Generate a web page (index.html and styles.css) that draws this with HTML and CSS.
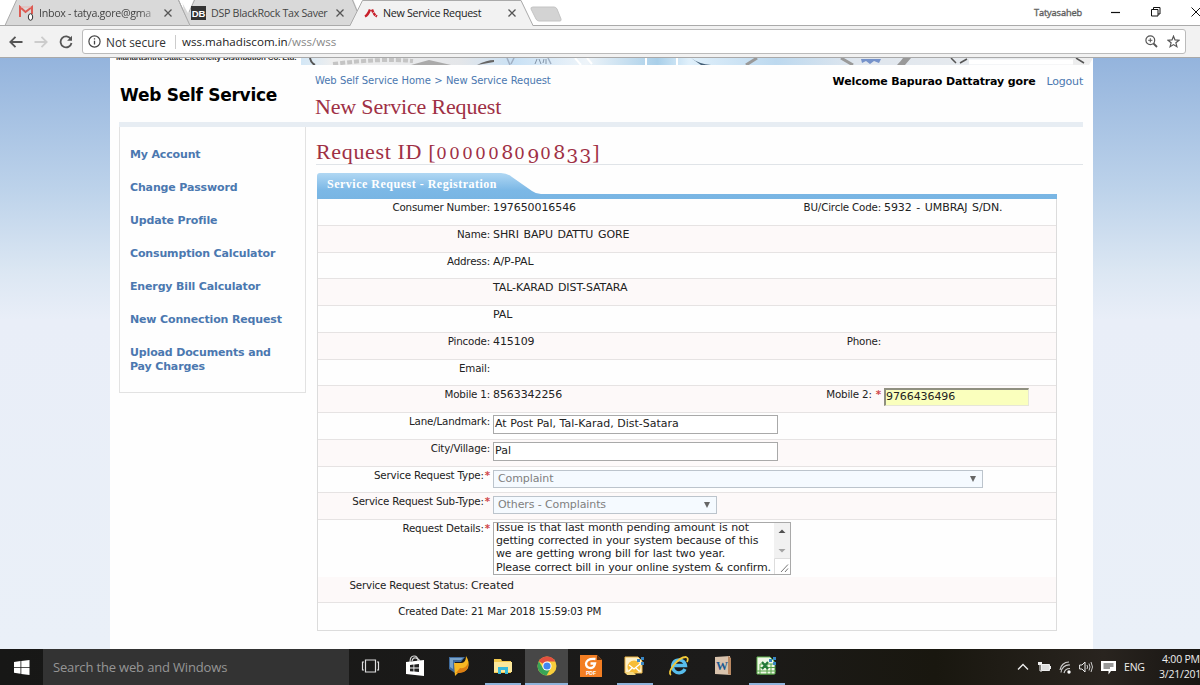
FILE: index.html
```
<!DOCTYPE html>
<html lang="en">
<head>
    <meta charset="UTF-8">
    <meta name="viewport" content="width=device-width, initial-scale=1.0">
    <title>New Service Request</title>
    <link rel="stylesheet" href="styles.css">
</head>
<body>
    <!-- Browser tabs -->
    <header class="tabs">
        <svg class="tabs-shape" width="1200" height="26" viewBox="0 0 1200 26">
            <path d="M0 25.5H1200" stroke="#aaa"/>
            <path d="M5 25.5L17 -1H178L190 25.5Z" fill="#d9d9d9" stroke="#aaa"/>
            <path d="M184 12L189 25.5H352L364 -1H182Z" fill="#d9d9d9"/>
            <path d="M178 -1L190 25.5H362M189 12L195 -1" fill="none" stroke="#aaa"/>
            <path d="M180 -1H194L188 13Z" fill="#fff"/>
            <path d="M353 -1H364L358 11Z" fill="#fff"/>
            <path d="M352 -1L357 11" stroke="#aaa"/>
            <path d="M350 26L363 -1H521L533 26Z" fill="#f2f2f2"/>
            <path d="M350 25.5L362.500 0.500H521L533 25.500" fill="none" stroke="#aaa"/>
            <path d="M533 7H554Q556 7 557 9L561 19Q561.500 21 560 21H539Q537 21 536 19L531 9Q530.500 7 533 7Z" fill="#d3d3d3" stroke="#c4c4c4"/>
        </svg>
        <div class="tab tab-one">
            <svg width="16" height="16" viewBox="0 0 16 16"><path d="M1 12V2L6.500 7L13 2V9" fill="none" stroke="#dd5a52" stroke-width="2"/><path d="M2 2H12" stroke="#e9b5b1"/><ellipse cx="11.500" cy="12" rx="2.200" ry="3.300" fill="#fff" stroke="#333"/></svg>
            <span class="tab-title faded">Inbox - tatya.gore@gma</span>
            <svg class="tab-close" width="8" height="8" viewBox="0 0 8 8"><path d="M.5 .5L7.500 7.500M7.500 .5L.5 7.500"/></svg>
        </div>
        <div class="tab tab-two">
            <span class="db-icon">DB</span>
            <span class="tab-title">DSP BlackRock Tax Saver</span>
            <svg class="tab-close" width="8" height="8" viewBox="0 0 8 8"><path d="M.5 .5L7.500 7.500M7.500 .5L.5 7.500"/></svg>
        </div>
        <div class="tab tab-three">
            <svg width="14" height="10" viewBox="0 0 14 10"><path d="M1 8.500Q4 7 6 1.500" fill="none" stroke="#c8202b" stroke-width="2.400"/><path d="M8 1.500Q10 7 13 8.500" fill="none" stroke="#c8202b" stroke-width="2.400" stroke-dasharray="3 .6"/></svg>
            <span class="tab-title">New Service Request</span>
            <svg class="tab-close" width="8" height="8" viewBox="0 0 8 8"><path d="M.5 .5L7.500 7.500M7.500 .5L.5 7.500"/></svg>
        </div>
        <div class="window-controls">
            <span class="profile">Tatyasaheb</span>
            <svg width="10" height="10" viewBox="0 0 10 10"><path d="M0 5.500H9" stroke="#111" stroke-width="1.200"/></svg>
            <svg width="10" height="10" viewBox="0 0 10 10"><path d="M.5 2.500H7V9H.5ZM2.500 2.500V.5H9V7H7" fill="none" stroke="#111"/></svg>
            <svg width="10" height="10" viewBox="0 0 10 10"><path d="M.5 .5L9.500 9.500M9.500 .5L.5 9.500" stroke="#111"/></svg>
        </div>
    </header>

    <!-- Address bar -->
    <div class="toolbar">
        <svg class="nav-icon" width="14" height="12" viewBox="0 0 14 12"><path d="M13.500 6H1.500M6.500 .8L1.300 6L6.500 11.200" stroke="#555"/></svg>
        <svg class="nav-icon" width="14" height="12" viewBox="0 0 14 12"><path d="M.5 6H12.500M7.500 .8L12.700 6L7.500 11.200" stroke="#ccc"/></svg>
        <svg class="nav-icon" width="14" height="14" viewBox="0 0 14 14"><path d="M11.800 4A5.500 5.500 0 1 0 12.500 8" stroke="#555"/><path d="M13 .8V5.700H8.100Z" fill="#555"/></svg>
        <div class="address">
            <svg width="13" height="13" viewBox="0 0 13 13"><circle cx="6.500" cy="6.500" r="5.600" fill="none" stroke="#444" stroke-width="1.200"/><path d="M6.500 5.800V9.600M6.500 3.200V4.600" stroke="#444" stroke-width="1.300"/></svg>
            <span class="not-secure">Not secure</span>
            <span class="url">wss.mahadiscom.in<span class="url-path">/wss/wss</span></span>
            <svg class="zoom-icon" width="13" height="13" viewBox="0 0 13 13"><circle cx="5.300" cy="5.300" r="4.400" fill="none" stroke="#555" stroke-width="1.200"/><path d="M8.500 8.500L12 12" stroke="#555" stroke-width="1.800"/><path d="M3.200 5.300H7.400M5.300 3.200V7.400" stroke="#555"/></svg>
            <svg width="13" height="13" viewBox="0 0 13 13"><path d="M6.500 1.200L8 4.900L12 5.200L8.900 7.800L9.900 11.700L6.500 9.600L3.100 11.700L4.100 7.800L1 5.200L5 4.900Z" fill="none" stroke="#555" stroke-width="1.200"/></svg>
        </div>
    </div>

    <main class="page">
        <div class="wrapper">
            <div class="banner">
                <div class="company">Maharashtra State Electricity Distribution Co. Ltd.</div>
                <svg class="banner-art" width="792" height="7" viewBox="0 0 792 7">
                    <defs>
                        <linearGradient id="sky">
                            <stop offset="0" stop-color="#d3e7f6"/>
                            <stop offset=".04" stop-color="#eee"/>
                            <stop offset=".2" stop-color="#e4e6e9"/>
                            <stop offset=".27" stop-color="#c9e1f5"/>
                            <stop offset=".36" stop-color="#eef4f9"/>
                            <stop offset=".45" stop-color="#a9cfe9"/>
                            <stop offset=".49" stop-color="#e0f0fb"/>
                            <stop offset=".6" stop-color="#bdd9ef"/>
                            <stop offset=".7" stop-color="#dfe6ee"/>
                            <stop offset="1" stop-color="#eee"/>
                        </linearGradient>
                    </defs>
                    <path d="M0 0H792L788 7H0Z" fill="url(#sky)"/>
                    <path d="M9 0Q10 5 14 7" stroke="#555" stroke-width="2" fill="none"/>
                    <path d="M32 6Q80 0 112 3" stroke="#c4c4c4" stroke-width="4" stroke-dasharray="5 2" fill="none"/>
                    <path d="M110 7L128 2L150 7Z" fill="#aaa"/>
                    <path d="M176 7Q186 2 193 2V4Z" fill="#666"/>
                    <path d="M206 0L209 7M213 0L210 6M247 0L250 6" stroke="#a0b0c4" stroke-width="1.500"/>
                    <path d="M234 6L236 1M238 1L240 6M242 5L243 1M245 1V6" stroke="#8394a8"/>
                    <path d="M274 0L280 7M286 0L291 6M345 0V7M376 0V7" stroke="#fff" stroke-width="2"/>
                    <path d="M390 0Q398 6 410 7H400Z" fill="#456078"/>
                    <path d="M445 7L456 0M540 0L552 7" stroke="#9a9a9a" stroke-width="3"/>
                    <path d="M560 1H580L578 5L573 3L569 6L565 3L561 5Z" fill="#7592ca"/>
                    <path d="M596 7Q600 3 602 0H610L604 7Z" fill="#999"/>
                    <path d="M668 4H772" stroke="#fff" stroke-width="5"/>
                    <path d="M650 0L655 5M659 5L666 1M775 0L783 5" stroke="#555" stroke-width="1.500"/>
                </svg>
            </div>

            <div class="page-header">
                <h1>Web Self Service</h1>
                <div class="page-title">
                    <div class="breadcrumb"><a>Web Self Service Home</a> &gt; <a>New Service Request</a></div>
                    <h2>New Service Request</h2>
                </div>
                <div class="welcome"><strong>Welcome Bapurao Dattatray gore</strong><a>Logout</a></div>
            </div>

            <div class="columns">
                <nav class="sidebar">
                    <a>My Account</a>
                    <a>Change Password</a>
                    <a>Update Profile</a>
                    <a>Consumption Calculator</a>
                    <a>Energy Bill Calculator</a>
                    <a>New Connection Request</a>
                    <a>Upload Documents and<br>Pay Charges</a>
                </nav>

                <section class="content">
                    <h2 class="request-id">Request ID [<span class="digits"><span class="x-digit">00000</span>8<span class="x-digit">0</span><span class="low-digit">9</span><span class="x-digit">0</span>8<span class="low-digit">33</span></span>]</h2>

                    <div class="panel-tab">
                        <svg class="panel-tab-shape" width="740" height="26" viewBox="0 0 740 26">
                            <defs>
                                <linearGradient id="tabFill" x2="0" y2="1">
                                    <stop offset="0" stop-color="#b0d7f3"/>
                                    <stop offset=".65" stop-color="#7cb8e6"/>
                                    <stop offset="1" stop-color="#78b5e3"/>
                                </linearGradient>
                            </defs>
                            <path d="M0 26V3Q0 0 3 0H184Q190 0 195 4L215 18Q219 21 224 21H740V26Z" fill="url(#tabFill)"/>
                        </svg>
                        <span>Service Request - Registration</span>
                    </div>

                    <div class="form">
                        <div class="row">
                            <label>Consumer Number:</label><span class="value">197650016546</span>
                            <label>BU/Circle Code:</label><span class="value">5932 - UMBRAJ S/DN.</span>
                        </div>
                        <div class="row"><label>Name:</label><span class="value">SHRI BAPU DATTU GORE</span></div>
                        <div class="row"><label>Address:</label><span class="value">A/P-PAL</span></div>
                        <div class="row"><label></label><span class="value">TAL-KARAD DIST-SATARA</span></div>
                        <div class="row"><label></label><span class="value">PAL</span></div>
                        <div class="row">
                            <label>Pincode:</label><span class="value">415109</span>
                            <label>Phone:</label>
                        </div>
                        <div class="row"><label>Email:</label></div>
                        <div class="row">
                            <label>Mobile 1:</label><span class="value">8563342256</span>
                            <label>Mobile 2: <i>*</i></label><span class="input mobile">9766436496</span>
                        </div>
                        <div class="row"><label>Lane/Landmark:</label><span class="input">At Post Pal, Tal-Karad, Dist-Satara</span></div>
                        <div class="row"><label>City/Village:</label><span class="input">Pal</span></div>
                        <div class="row"><label>Service Request Type:<i>*</i></label><span class="select">Complaint<b></b></span></div>
                        <div class="row"><label>Service Request Sub-Type:<i>*</i></label><span class="select select-short">Others - Complaints<b></b></span></div>
                        <div class="row row-tall">
                            <label>Request Details:<i>*</i></label>
                            <div class="textarea">
                                <p>Issue is that last month pending amount is not<br>getting corrected in your system because of this<br>we are getting wrong bill for last two year.<br>Please correct bill in your online system &amp; confirm.</p>
                                <svg width="16" height="51" viewBox="0 0 16 51"><path d="M0 0H16V35H0Z" fill="#f1f1f1"/><path d="M4.500 10L8 6.500L11.500 10Z" fill="#505050"/><path d="M4.500 26L8 29.500L11.500 26Z" fill="#a3a3a3"/><path d="M.5 51V35.500H16" fill="none" stroke="#ddd"/><path d="M7 49L14 41.500M11 49L14 45.500" stroke="#777"/></svg>
                            </div>
                        </div>
                        <div class="row row-status"><label>Service Request Status:</label><span class="value">Created</span></div>
                        <div class="row row-status"><label>Created Date:</label><span class="value date">21 Mar 2018 15:59:03 PM</span></div>
                    </div>
                </section>
            </div>
        </div>
    </main>

    <!-- Windows taskbar -->
    <footer class="taskbar">
        <div class="start">
            <svg width="16" height="15" viewBox="0 0 16 15"><path d="M0 2L6.500 1.100V7H0ZM7.300 1L15.500 0V7H7.300ZM0 7.800H6.500V13.700L0 12.800ZM7.300 7.800H15.500V15L7.300 13.900Z" fill="#fff"/></svg>
        </div>
        <div class="search">Search the web and Windows</div>
        <div class="apps">
            <div class="app"><svg width="20" height="14" viewBox="0 0 20 14"><path d="M4.500 1H14.500V13H4.500ZM3 3H1.500V11H3M16 3H17.500V11H16" fill="none" stroke="#ddd" stroke-width="1.200"/></svg></div>
            <div class="app"><svg width="20" height="22" viewBox="0 0 20 22"><path d="M1 7L19 5V21L1 19Z" fill="#fff"/><path d="M5 7Q5 1 9 1T13 6M7 6Q8 2 11 3T15 6" fill="none" stroke="#ddd" stroke-width="1.200"/><path d="M5 10L8.500 9.600V12.600H5ZM9.300 9.500L14 9V12.600H9.300ZM5 13.400H8.500V16.500L5 16.200ZM9.300 13.400H14V17L9.300 16.600Z" fill="#222"/></svg></div>
            <div class="app"><svg width="22" height="22" viewBox="0 0 22 22"><path d="M1 2H17L13 7H7V18L1 14Z" fill="#3f6b9d"/><path d="M2 3H15L13 5H5V14L2 12Z" fill="#79a3c9"/><path d="M6 8H14Q18 7 18 1Q22 7 20 13Q17 18 11 17L7 21Z" fill="#f7b822"/><path d="M8 18L12 13Q18 14 20 8Q21 17 12 18Z" fill="#dc7f13"/></svg></div>
            <div class="app running"><svg width="20" height="18" viewBox="0 0 20 18"><path d="M1 2H8L9 4H18V16H1Z" fill="#f2c94e"/><path d="M1 5H19V15H1Z" fill="#fce89b"/><path d="M5 17V10H15V17H12V13H8V17Z" fill="#36b9dc"/></svg></div>
            <div class="app running active"><svg width="20" height="20" viewBox="0 0 20 20"><circle cx="10" cy="10" r="9.500" fill="#f9ce3c"/><path d="M10 10L1.800 5.200A9.500 9.500 0 0 1 18.300 5.500H10Z" fill="#e2503f"/><path d="M1.800 5.200A9.500 9.500 0 0 0 9.500 19.500L13.500 12.500L6.200 12.500Z" fill="#39a457"/><circle cx="10" cy="10" r="4.600" fill="#fff"/><circle cx="10" cy="10" r="3.600" fill="#4286ee"/></svg></div>
            <div class="app"><svg width="22" height="22" viewBox="0 0 22 22"><path d="M0 0H17L22 5V22H0Z" fill="#f37e23"/><path d="M17 0V5H22Z" fill="#603010"/><path d="M15.500 4Q7 3 6 8.500Q6 13 11 13Q14 13 15 8.500H10.500" fill="none" stroke="#fff" stroke-width="2.300"/><text x="11" y="20" class="pdf-text">PDF</text></svg></div>
            <div class="app running"><svg width="22" height="20" viewBox="0 0 22 20"><path d="M1 1H14L18 5V17H1Z" fill="#fff1c8" stroke="#eeb747"/><circle cx="10" cy="11" r="6.500" fill="#f6bd36"/><path d="M5 9L10 13L16 8M5 15L8 12M15 15L12 12" fill="none" stroke="#fff" stroke-width="1.300"/><path d="M13 3H16V6H13ZM17 1H20V4H17ZM17 6H20V9H17Z" fill="#3987c5"/><path d="M1 16H9L12 19H3Z" fill="#f4d77f"/></svg></div>
            <div class="app"><svg width="22" height="22" viewBox="0 0 22 22"><path d="M17 14A6.500 6.500 0 1 1 17.500 10.500H6" fill="none" stroke="#57bdec" stroke-width="3.300"/><path d="M3 20Q0 18 5 11Q12 2 18 2Q21 3 19 7" fill="none" stroke="#f2c939" stroke-width="1.800"/></svg></div>
            <div class="app"><svg width="18" height="22" viewBox="0 0 18 22"><path d="M1 2L16 1L17 20L1 19Z" fill="#d9c3ad"/><path d="M14 1L17 3V20L14 19Z" fill="#b98862"/><text x="8" y="15" class="word-text">W</text></svg></div>
            <div class="app running"><svg width="22" height="20" viewBox="0 0 22 20"><path d="M1 1H14L18 5V18H1Z" fill="#eff8e6" stroke="#63b551"/><path d="M4 8H19V18H4Z" fill="#eff8e6"/><path d="M1 15H20M4 8H19V18H4ZM4 11.500H19M11 8V18M15 8V18" fill="none" stroke="#55a246"/><path d="M6 6L12 13M12 6L6 13" stroke="#23793a" stroke-width="2.200"/><path d="M13 3H16V6H13ZM17 1H20V4H17ZM17 6H20V9H17Z" fill="#3987c5"/></svg></div>
        </div>
        <div class="tray">
            <svg width="12" height="8" viewBox="0 0 12 8"><path d="M1 6.500L6 1.500L11 6.500" fill="none" stroke="#eee" stroke-width="1.300"/></svg>
            <svg width="14" height="12" viewBox="0 0 14 12"><path d="M4.500 3.500H12.500V9.500H4.500Z" fill="#ddd" stroke="#eee"/><path d="M13 5H14V8H13ZM1 1H5V4H1Z" fill="#eee"/><path d="M3 4V10H5" fill="none" stroke="#eee"/></svg>
            <svg width="12" height="13" viewBox="0 0 12 13"><path d="M1 9A9 9 0 0 1 10 1M2 11.500A8 8 0 0 1 11 4M5 12A6 6 0 0 1 11 7.500" fill="none" stroke="#ccc" stroke-width="1.200"/><circle cx="10" cy="11" r="1.700" fill="#fff"/></svg>
            <svg width="14" height="12" viewBox="0 0 14 12"><path d="M.6 4H3L6 1V11L3 8H.6Z" fill="none" stroke="#eee"/><path d="M8 4Q9.200 6 8 8M10 2.500Q12 6 10 9.500M12 1Q15 6 12 11" fill="none" stroke="#ccc"/></svg>
            <svg width="15" height="15" viewBox="0 0 15 15"><path d="M0 1H15V11H10L7.500 14.500V11H0Z" fill="#fff"/><path d="M2.500 4H12.500M2.500 6H12.500M2.500 8H9" stroke="#333"/></svg>
            <span class="lang">ENG</span>
            <div class="clock"><span class="time">4:00 PM</span><span>3/21/201</span></div>
        </div>
    </footer>
</body>
</html>
```
FILE: styles.css
```
* {
    box-sizing: border-box;
}

body {
    margin: 0;
    width: 1200px;
    height: 685px;
    overflow: hidden;
    display: flex;
    flex-direction: column;
    font-family: Verdana, "DejaVu Sans", sans-serif;
    color: #222;
    background-color: white;
}

h1, h2, p {
    margin: 0;
    font-weight: normal;
}

svg {
    display: block;
    flex: none;
}

/* Browser tabs */
.tabs {
    position: relative;
    height: 26px;
    display: flex;
    flex: none;
    font-family: "Open Sans", sans-serif;
    font-size: 11px;
}

.tabs-shape {
    position: absolute;
    top: 0;
    left: 0;
}

.tab {
    position: relative;
    display: flex;
    align-items: center;
    height: 26px;
    white-space: nowrap;
}

.tab-one {
    width: 190px;
    padding-left: 19px;
    gap: 4px;
}

.tab-two {
    width: 172px;
    padding-left: 1px;
    gap: 5px;
}

.tab-three {
    width: 172px;
    padding-left: 2px;
    gap: 5px;
}

.tab-title {
    width: 118px;
    overflow: hidden;
    color: #444;
    font-size: 10.7px;
    letter-spacing: -0.3px;
}

.tab-two .tab-title {
    width: 117px;
}

.faded {
    -webkit-mask-image: linear-gradient(90deg, #000 85%, rgba(0, 0, 0, 0.2));
    mask-image: linear-gradient(90deg, #000 85%, rgba(0, 0, 0, 0.2));
}

.tab-three .tab-title {
    width: 116px;
    color: #222;
}

.tab-close {
    margin-left: 4px;
    stroke: #555;
    stroke-width: 1.3;
}

.tab-one .tab-close,
.tab-two .tab-close {
    margin-left: 3px;
}

.db-icon {
    width: 15px;
    height: 14px;
    background-color: #333;
    color: white;
    font: bold 9.5px/15px "Liberation Sans", sans-serif;
    text-align: center;
}

.window-controls {
    position: relative;
    display: flex;
    align-items: center;
    height: 24px;
    margin-left: auto;
    gap: 30px;
    margin-right: -1px;
}

.profile {
    font-size: 9.2px;
    color: #888;
    -webkit-text-stroke: 0.4px #555;
    letter-spacing: -0.1px;
    margin-right: -1px;
}

/* Address bar */
.toolbar {
    height: 32px;
    flex: none;
    display: flex;
    align-items: center;
    padding: 0 14px 0 9px;
    gap: 11px;
    background-color: #f2f2f2;
    border-bottom: 1px solid #a9a9a9;
    font-family: "Open Sans", sans-serif;
    font-size: 12px;
}

.nav-icon {
    fill: none;
    stroke-width: 1.8;
}

.address {
    flex: 1;
    height: 25px;
    display: flex;
    align-items: center;
    padding: 0 5px;
    margin-left: -2px;
    background-color: white;
    border: 1px solid #bbb;
    border-radius: 3px;
}

.not-secure {
    width: 70px;
    margin-left: 5px;
    border-right: 1px solid #ccc;
    line-height: 14px;
    font-size: 11.8px;
    color: #333;
}

.url {
    margin-left: 6px;
    font-size: 11.6px;
    color: #222;
}

.url-path {
    color: #888;
}

.zoom-icon {
    margin-left: auto;
    margin-right: 9px;
}

/* Web page */
.page {
    height: 591px;
    flex: none;
    padding-left: 110px;
    background: linear-gradient(#94b4dd, #bcd2ea 130px, #dce7f3 215px, #e9eef8 262px, #eaf0f8);
}

.wrapper {
    width: 983px;
    height: 591px;
    background-color: #fefefe;
}

.banner {
    display: flex;
    height: 7px;
    overflow: hidden;
}

.company {
    width: 191px;
    padding-left: 6px;
    margin-top: -7px;
    font: bold 8px/14px "Liberation Sans", sans-serif;
    letter-spacing: -0.17px;
    white-space: nowrap;
    color: #333;
}

.page-header {
    display: flex;
    height: 62px;
    margin: 0 10px 0 9px;
    padding-left: 1px;
    border-bottom: 5px solid #e7edf3;
}

a {
    color: #4b78b0;
}

h1 {
    width: 195px;
    padding-top: 19px;
    font-size: 17px;
    line-height: 22px;
    font-weight: bold;
    letter-spacing: -0.27px;
    color: black;
}

.breadcrumb {
    padding-top: 8px;
    font-size: 10px;
    line-height: 16px;
    letter-spacing: -0.1px;
    word-spacing: 0.4px;
    color: #4b78b0;
    white-space: nowrap;
}

h2 {
    font-family: "Liberation Serif", serif;
    font-size: 22px;
    line-height: 26px;
    color: #9f3045;
    white-space: nowrap;
}

.page-title h2 {
    margin-top: 5px;
    letter-spacing: -0.17px;
}

.welcome {
    display: flex;
    gap: 11px;
    margin-left: auto;
    padding-top: 9px;
    font-size: 11px;
    line-height: 16px;
    letter-spacing: -0.14px;
}

.welcome a {
    letter-spacing: -0.2px;
}

.welcome strong {
    color: black;
}

.columns {
    display: flex;
    padding-left: 9px;
    align-items: flex-start;
}

.sidebar {
    display: flex;
    flex-direction: column;
    gap: 19px;
    width: 187px;
    height: 266px;
    padding: 21px 0 0 10px;
    border: 1px solid #e2e2e2;
    border-top: none;
    font-size: 11px;
    line-height: 14px;
    letter-spacing: -0.15px;
    font-weight: bold;
}

.content {
    width: 767px;
    margin-left: 10px;
}

.request-id {
    height: 38px;
    padding-top: 12px;
    border-bottom: 1px solid #e0e4e8;
    letter-spacing: 0.65px;
}

/* Old-style figures */
.digits {
    font-family: "DejaVu Serif", serif;
    font-size: 19px;
    line-height: 0;
    letter-spacing: 0.9px;
}

.x-digit {
    font-size: 16.5px;
    letter-spacing: 2.5px;
}

.low-digit {
    vertical-align: -4px;
}

.panel-tab {
    position: relative;
    width: 740px;
    height: 26px;
    margin: 8px 0 0 1px;
    padding-left: 10px;
    font: bold 12px/23px "Liberation Serif", serif;
    letter-spacing: 0.5px;
    color: white;
}

.panel-tab span {
    position: relative;
}

.panel-tab-shape {
    position: absolute;
    top: 0;
    left: 0;
}

.form {
    width: 740px;
    margin-left: 1px;
    border: 1px solid #dcdcdc;
    border-top: none;
}

.row {
    display: grid;
    grid-template-columns: 172px 240px 145px 1fr;
    column-gap: 3px;
    height: 26.75px;
    align-items: start;
    border-bottom: 1px solid #e6e3e3;
    white-space: nowrap;
    font-size: 11px;
    line-height: 14px;
}

.row:nth-child(even) {
    background-color: #fdf9f9;
}

.row:last-child {
    border-bottom: none;
}

.row-tall {
    height: 56.5px;
    border-bottom: none;
}

.row-status {
    grid-template-columns: 150px 1fr;
}

label {
    padding-top: 1px;
    font-size: 10.3px;
    letter-spacing: -0.18px;
    text-align: right;
}

label i {
    padding-left: 1px;
    color: #d04848;
    font-style: normal;
    font-weight: bold;
}

.value {
    padding-top: 2px;
    letter-spacing: -0.08px;
    word-spacing: 1.2px;
}

.date {
    font-size: 10.3px;
    padding-top: 1px;
    letter-spacing: -0.27px;
    word-spacing: 0.8px;
}

.input {
    width: 285px;
    height: 19px;
    margin-top: 2px;
    padding: 1px 1px;
    background-color: white;
    border: 1px solid #a9a9a9;
}

.mobile {
    width: 145px;
    height: 18px;
    background-color: #faffbd;
    border-width: 2px 1px 1px 2px;
    border-style: solid;
    border-color: #8f8f80 #e6e6d8 #e6e6d8 #8f8f80;
    padding: 0;
    letter-spacing: -0.08px;
}

.select {
    display: flex;
    align-items: center;
    justify-content: space-between;
    width: 490px;
    height: 18px;
    margin-top: 3px;
    padding: 0 6px 0 4px;
    background-color: #f5faff;
    border: 1px solid #bcc4cc;
    color: #808080;
    letter-spacing: -0.1px;
}

.select-short {
    width: 224px;
}

.select b {
    border: 3px solid transparent;
    border-top: 6px solid #666;
    border-bottom: none;
}

.textarea {
    display: flex;
    justify-content: space-between;
    width: 298px;
    height: 53px;
    margin-top: 1.5px;
    padding-left: 2px;
    background-color: white;
    border: 1px solid #a9a9a9;
}

.textarea p {
    margin-top: -2px;
    line-height: 13.4px;
    letter-spacing: -0.18px;
    word-spacing: 0.5px;
}

/* Taskbar */
.taskbar {
    height: 36px;
    flex: none;
    display: flex;
    align-items: stretch;
    background: linear-gradient(90deg, #171716, #1c1b1a 60%, #19170f 78%, #29241f 92%, #181512);
    font-family: "Open Sans", sans-serif;
    color: #eee;
}

.start {
    width: 43px;
    display: flex;
    align-items: center;
    justify-content: center;
}

.search {
    width: 306px;
    padding-left: 10px;
    background-color: #333;
    color: #969696;
    font-size: 13px;
    letter-spacing: -0.16px;
    line-height: 36px;
}

.apps {
    display: flex;
    gap: 1px;
}

.app {
    width: 43px;
    display: flex;
    align-items: center;
    justify-content: center;
    border-bottom: 2px solid transparent;
}

.running {
    background: linear-gradient(#8eb3da, #8eb3da) center bottom / 36px 2px no-repeat border-box;
}

.active {
    background-color: #474747;
    background-size: 43px 2px;
}

.pdf-text {
    font: bold 5px "Liberation Sans", sans-serif;
    fill: white;
    text-anchor: middle;
}

.word-text {
    font: bold 12px "Liberation Serif", serif;
    fill: #1d5a91;
    text-anchor: middle;
}

.tray {
    display: flex;
    align-items: center;
    gap: 8px;
    margin-left: auto;
    font-size: 10.5px;
    letter-spacing: -0.2px;
}

.lang {
    width: 21px;
}

.clock {
    display: flex;
    flex-direction: column;
    width: 41px;
    margin-left: 6px;
    line-height: 15px;
    white-space: nowrap;
}

.time {
    padding-left: 3px;
}
```
